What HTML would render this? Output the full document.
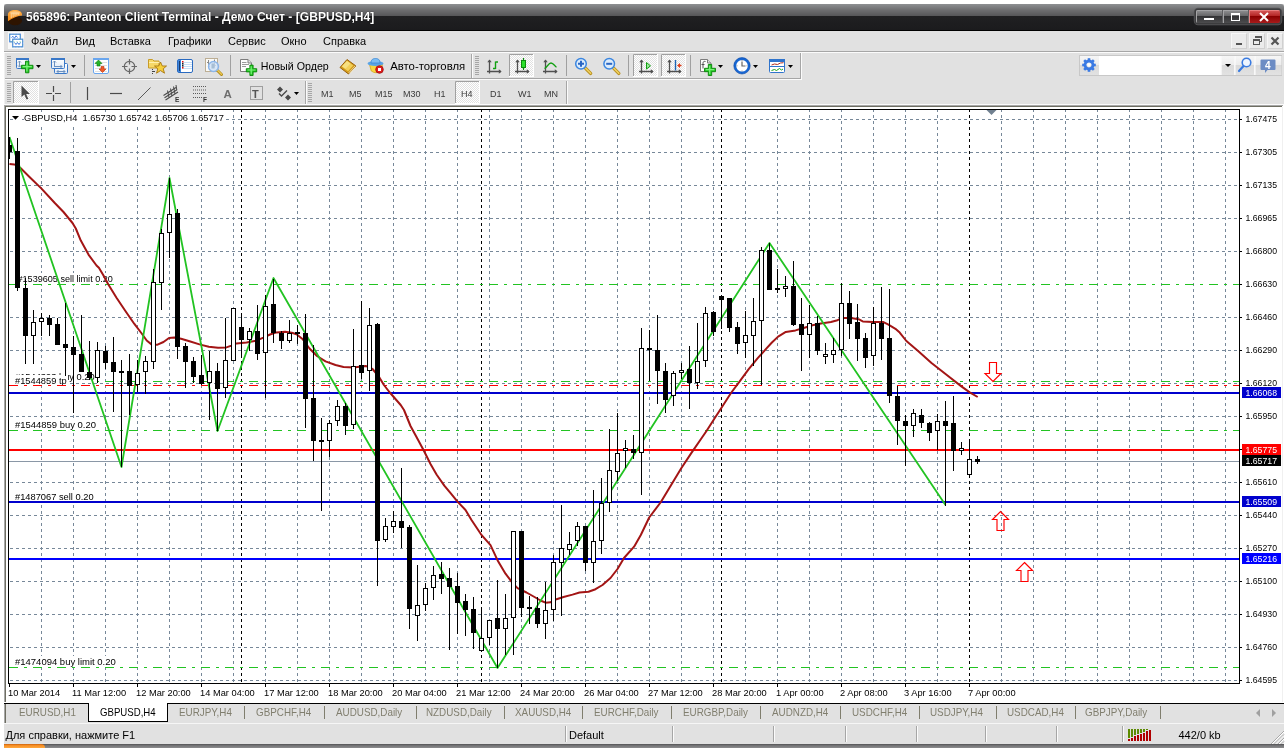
<!DOCTYPE html>
<html lang="ru"><head><meta charset="utf-8"><title>565896: Panteon Client Terminal - Демо Счет - [GBPUSD,H4]</title>
<style>

html,body{margin:0;padding:0;background:#fff;}
body{width:1288px;height:748px;position:relative;overflow:hidden;font-family:"Liberation Sans",sans-serif;font-size:11px;color:#000;}
.abs{position:absolute;}
.t{position:absolute;white-space:nowrap;line-height:1;}
#win{position:absolute;left:4px;top:4px;width:1280px;height:740px;background:#e1e1e1;}
#title{position:absolute;left:4px;top:4px;width:1280px;height:27px;background:linear-gradient(#8e9092 0px,#6e6e70 6px,#58585a 11.5px,#202022 12.2px,#1b1b1d 25.8px,#000 26px,#000 27px);border-radius:3px 3px 0 0;}
#title .cap{position:absolute;left:22px;top:5px;font-weight:bold;font-size:12.1px;color:#fff;white-space:nowrap;line-height:16px;text-shadow:0 0 1px #000;}
.hl{position:absolute;height:1px;}
.vl{position:absolute;width:1px;}
.menu{position:absolute;top:35px;font-size:11px;line-height:13px;white-space:nowrap;}
.tab{position:absolute;top:706px;font-size:11px;line-height:13px;color:#807e6e;white-space:nowrap;transform:scaleX(.895);transform-origin:0 0;}
.tsep{position:absolute;top:706px;width:1px;height:13px;background:#807e6e;}
.tf{position:absolute;top:87.5px;font-size:9.8px;line-height:11px;color:#3a3a3a;white-space:nowrap;transform:scaleX(.92);transform-origin:0 0;}
.pressed{position:absolute;background:#f1f1f1;border:1px solid;border-color:#a0a0a0 #fff #fff #a0a0a0;box-sizing:border-box;}
.grip{position:absolute;width:4px;background:repeating-linear-gradient(#a6a6a6 0px,#a6a6a6 1px,transparent 1px,transparent 2px);}
.sep{position:absolute;width:1px;background:#a8a8a8;box-shadow:1px 0 0 #f4f4f4;}
.dd{position:absolute;width:0;height:0;border-left:3px solid transparent;border-right:3px solid transparent;border-top:3px solid #000;}

</style></head><body><div id="root" style="position:absolute;left:0;top:0;width:1288px;height:748px;will-change:transform">
<div id="win"></div>
<div id="title"><svg class="abs" style="left:2.500px;top:4.500px" width="16" height="17" viewBox="0 0 17 18" preserveAspectRatio="none"><defs><linearGradient id="ag" x1="0" y1="0" x2="0" y2="1"><stop offset="0" stop-color="#ffb04a"/><stop offset="1" stop-color="#f58a14"/></linearGradient></defs><ellipse cx="8.500" cy="12.500" rx="7.500" ry="4.800" fill="#2e1400"/><path d="M1 6C1 2.800 4.200 1 8.500 1s7.500 1.800 7.500 5v1C12 7.500 5.500 9.500 1 13z" fill="url(#ag)"/><path d="M4.500 4.500v5M6.500 4v4.500M8.500 4v3.800M10.500 4v3M12.500 4.500v2" stroke="#ffe6c0" stroke-width="1.100" opacity=".75" fill="none"/><ellipse cx="8.500" cy="4" rx="5.200" ry="1.600" fill="#ffe0b0" opacity=".6"/></svg><div class="cap">565896: Panteon Client Terminal - Демо Счет - [GBPUSD,H4]</div><div class="abs" style="left:1192px;top:6px;width:84px;height:13px;border-radius:2px;box-shadow:0 0 0 1.500px #3c3c3e,0 0 0 2.200px #5a5a5c;overflow:hidden;background:#5e5e60"><div class="abs" style="left:0;top:0;width:26px;height:13px;background:linear-gradient(#929294,#626264 50%,#343436 50%,#4c4c4e);box-shadow:inset 1px 1px 0 #a4a4a6"></div><div class="abs" style="left:27px;top:0;width:25px;height:13px;background:linear-gradient(#929294,#626264 50%,#343436 50%,#4c4c4e);box-shadow:inset 1px 1px 0 #a4a4a6"></div><div class="abs" style="left:53px;top:0;width:31px;height:13px;background:linear-gradient(#d85c5c,#b02020 50%,#8a0000 50%,#a81c1c);box-shadow:inset 1px 1px 0 #e88080"></div><div class="abs" style="left:8px;top:8px;width:10px;height:2px;background:#fff"></div><div class="abs" style="left:35px;top:3px;width:9px;height:8px;border:1px solid #fff;border-top-width:2px;box-sizing:border-box"></div><svg class="abs" style="left:62px;top:1.500px" width="12" height="10" viewBox="0 0 12 10"><path d="M2 1l8 8M10 1l-8 8" stroke="#fff" stroke-width="2"/></svg></div></div>
<div class="abs" style="left:4px;top:31px;width:1280px;height:20px;background:#e1e1e1"></div>
<svg class="abs" style="left:8px;top:32px" width="17" height="18" viewBox="0 0 17 18"><rect width="16" height="17" fill="#f8f8f8"/><rect x="1.700" y="2.200" width="10.600" height="7.600" fill="#fff" stroke="#4a82e4" stroke-width="1.150"/><path d="M3.500 5.500l1.500 -1.200l1.500 2l1.500 -2.500l1.500 1.700" fill="none" stroke="#3f7ae0"/><rect x="4.700" y="7.200" width="10" height="7.600" fill="#fff" stroke="#4a82e4" stroke-width="1.150"/><path d="M6.500 10.500l1.500 2l1.500 -2l1.500 2l1.500 -2" fill="none" stroke="#3f7ae0"/><rect x="1.700" y="2.200" width="10.600" height="7.600" fill="none" stroke="#58c090" stroke-width="1.150" stroke-dasharray="1 2" opacity=".6"/><rect x="4.700" y="7.200" width="10" height="7.600" fill="none" stroke="#58c090" stroke-width="1.150" stroke-dasharray="1 2" opacity=".6"/></svg>
<div class="menu" style="left:31px">Файл</div>
<div class="menu" style="left:75px">Вид</div>
<div class="menu" style="left:110px">Вставка</div>
<div class="menu" style="left:168px">Графики</div>
<div class="menu" style="left:228px">Сервис</div>
<div class="menu" style="left:281px">Окно</div>
<div class="menu" style="left:323px">Справка</div>
<div class="abs" style="left:1231px;top:33px;width:16px;height:16px;background:#ebebeb;border:1px solid;border-color:#f6f6f6 #d0d0d0 #d0d0d0 #f6f6f6;box-sizing:border-box"></div><div class="abs" style="left:1249px;top:33px;width:16px;height:16px;background:#ebebeb;border:1px solid;border-color:#f6f6f6 #d0d0d0 #d0d0d0 #f6f6f6;box-sizing:border-box"></div><div class="abs" style="left:1267px;top:33px;width:16px;height:16px;background:#ebebeb;border:1px solid;border-color:#f6f6f6 #d0d0d0 #d0d0d0 #f6f6f6;box-sizing:border-box"></div><div class="abs" style="left:1236px;top:43px;width:6px;height:2px;background:#555"></div><svg class="abs" style="left:1252px;top:35px" width="11" height="11" viewBox="0 0 11 11"><path d="M3.500 1.500h6v5h-2" fill="none" stroke="#555"/><rect x="3" y="1" width="7" height="2" fill="#555"/><rect x="1.500" y="4.500" width="6" height="5" fill="none" stroke="#555"/><rect x="1" y="4" width="7" height="2" fill="#555"/></svg><svg class="abs" style="left:1270px;top:36px" width="11" height="10" viewBox="0 0 11 10"><path d="M1.500 1.500l7 7M8.500 1.500l-7 7" stroke="#555" stroke-width="2.200"/></svg>
<div class="hl" style="left:4px;top:51px;width:1280px;background:#a6a6a6"></div>
<div class="hl" style="left:4px;top:52px;width:1280px;background:#fbfbfb"></div>
<div class="hl" style="left:4px;top:78px;width:797px;background:#a6a6a6"></div>
<div class="hl" style="left:4px;top:79px;width:797px;background:#fbfbfb"></div>
<div class="vl" style="left:800px;top:53px;height:26px;background:#a6a6a6"></div>
<div class="vl" style="left:801px;top:53px;height:27px;background:#fbfbfb"></div>
<div class="hl" style="left:4px;top:104px;width:1280px;background:#fbfbfb"></div>
<div class="vl" style="left:305px;top:81px;height:23px;background:#a6a6a6"></div>
<div class="vl" style="left:306px;top:81px;height:23px;background:#fbfbfb"></div>
<div class="vl" style="left:566px;top:81px;height:23px;background:#a6a6a6"></div>
<div class="vl" style="left:567px;top:81px;height:23px;background:#fbfbfb"></div>
<div class="vl" style="left:4px;top:53px;height:51px;background:#f0f0f0"></div>
<div class="grip" style="left:7px;top:56px;height:19px"></div>
<div class="grip" style="left:475px;top:56px;height:19px"></div>
<div class="grip" style="left:7px;top:83px;height:19px"></div>
<div class="grip" style="left:308px;top:83px;height:19px"></div>
<div class="vl" style="left:471px;top:54px;height:24px;background:#a6a6a6"></div>
<div class="vl" style="left:472px;top:54px;height:24px;background:#fbfbfb"></div>
<svg class="abs" style="left:0;top:0" width="1288" height="108" viewBox="0 0 1288 108" font-family='"Liberation Sans", sans-serif'>
<defs><linearGradient id="wg" x1="0" y1="0" x2="0" y2="1"><stop offset="0" stop-color="#fff"/><stop offset="1" stop-color="#dfe9f6"/></linearGradient><linearGradient id="bg2" x1="0" y1="0" x2="0" y2="1"><stop offset="0" stop-color="#f6f6f6"/><stop offset=".5" stop-color="#ececec"/><stop offset=".5" stop-color="#dadada"/><stop offset="1" stop-color="#e2e2e2"/></linearGradient><pattern id="chk" width="2" height="2" patternUnits="userSpaceOnUse"><rect width="2" height="2" fill="#fff"/><rect width="1" height="1" fill="#e1e1e1"/><rect x="1" y="1" width="1" height="1" fill="#e1e1e1"/></pattern></defs>
<rect x="509" y="54" width="25" height="23" fill="url(#chk)"/>
<path d="M509.5 77V54.5H534" fill="none" stroke="#a0a0a0"/>
<path d="M509 76.5H533.5V54" fill="none" stroke="#fff"/>
<rect x="633" y="54" width="25" height="23" fill="url(#chk)"/>
<path d="M633.5 77V54.5H658" fill="none" stroke="#a0a0a0"/>
<path d="M633 76.5H657.5V54" fill="none" stroke="#fff"/>
<rect x="661" y="54" width="25" height="23" fill="url(#chk)"/>
<path d="M661.5 77V54.5H686" fill="none" stroke="#a0a0a0"/>
<path d="M661 76.5H685.5V54" fill="none" stroke="#fff"/>
<rect x="13" y="81" width="26" height="23" fill="url(#chk)"/>
<path d="M13.5 104V81.5H39" fill="none" stroke="#a0a0a0"/>
<path d="M13 103.5H38.5V81" fill="none" stroke="#fff"/>
<rect x="455" y="81" width="25" height="23" fill="url(#chk)"/>
<path d="M455.5 104V81.5H480" fill="none" stroke="#a0a0a0"/>
<path d="M455 103.5H479.5V81" fill="none" stroke="#fff"/>
<rect x="84" y="55" width="1" height="21" fill="#a0a0a0"/>
<rect x="230" y="55" width="1" height="21" fill="#a0a0a0"/>
<rect x="566" y="55" width="1" height="21" fill="#a0a0a0"/>
<rect x="628" y="55" width="1" height="21" fill="#a0a0a0"/>
<rect x="690" y="55" width="1" height="21" fill="#a0a0a0"/>
<rect x="70" y="82" width="1" height="21" fill="#a0a0a0"/>
<rect x="16.500" y="58.500" width="12" height="10" rx="1" fill="url(#wg)" stroke="#3a78c8"/><rect x="16" y="58" width="13" height="2" fill="#3a78c8"/>
<path d="M19.500 61v6M18 62.500l1.500 -1.500l1.500 1.500M18 65.500l1.500 1.500l1.500 -1.500" stroke="#7a98b8" fill="none"/>
<path d="M25.5 61.2h3.4v4.1h4.1v3.4h-4.1v4.1h-3.4v-4.1h-4.1v-3.4h4.1z" fill="#22c822" stroke="#0a860a" stroke-width=".9" stroke-linejoin="round"/><path d="M26.9 62.400000000000006v9.2M22.599999999999998 66.7h9.2" stroke="#7df07d" stroke-width="1.200" fill="none"/>
<path d="M36 65h5l-2.500 3z" fill="#000"/>
<rect x="54.500" y="63.500" width="13" height="10" rx="1" fill="url(#wg)" stroke="#3a78c8"/>
<path d="M57 71.500h8M58.500 70l-1.500 1.500l1.500 1.500M63.500 70l1.500 1.500l-1.500 1.500" stroke="#6a90c0" fill="none"/>
<rect x="51.500" y="58.500" width="13" height="10" rx="1" fill="url(#wg)" stroke="#3a78c8"/><rect x="51" y="58" width="14" height="2" fill="#3a78c8"/>
<path d="M54.500 61v5M53 62.500l1.500 -1.500l1.500 1.500M54 66.500h8M60.500 65l1.500 1.500l-1.500 1.500" stroke="#6a90c0" fill="none"/>
<path d="M71 65h5l-2.500 3z" fill="#000"/>
<rect x="93.500" y="58.500" width="15" height="15" rx="1.500" fill="#fff" stroke="#6aa6ee"/><rect x="93" y="58" width="16" height="2" fill="#6aa6ee"/>
<path d="M95 62.500h12M95 65.500h12M95 68.500h12M95 71.500h12" stroke="#e0e0e0"/>
<path d="M98.500 60l3.500 3.500h-2v2.500h-3v-2.500h-2z" fill="#28b428" stroke="#0c7c0c" stroke-width=".6"/>
<path d="M102.500 72.500l-3.500 -3.500h2v-2.500h3v2.500h2z" fill="#f05a28" stroke="#b8300c" stroke-width=".6"/>
<circle cx="129.500" cy="66.500" r="5.200" fill="none" stroke="#686868" stroke-width="1.200"/>
<path d="M122 66.500h5.500M131.500 66.500h5.500M129.500 59v5.500M129.500 68.500v5.500" stroke="#686868" stroke-width="1.200"/>
<path d="M148.500 59.500h4l1.500 1.500h5v7h-10.500z" fill="#f6d868" stroke="#c89c28"/><path d="M149 62.500h10" stroke="#fff1b0"/>
<path d="M152.500 69v1M152.500 71v1M152.500 73v1M153 71.500h2" stroke="#444"/>
<path d="M160.500 62l1.800 4h4.200l-3.300 2.800l1.300 4.400l-4 -2.600l-4 2.600l1.300 -4.400l-3.300 -2.800h4.200z" fill="#f6cf3c" stroke="#a87610" stroke-width=".9" stroke-linejoin="round"/>
<rect x="177.500" y="59.500" width="15" height="13" rx="1.500" fill="#fff" stroke="#2a6ac0"/><rect x="178" y="60" width="3" height="12" fill="#3f86dc"/>
<path d="M182 62.500h10M182 64.500h10M182 66.500h10M182 68.500h10" stroke="#b8d4f4" stroke-width=".8"/>
<rect x="179" y="61" width="1" height="10" fill="#1a3c70"/>
<rect x="182" y="61" width="1.500" height="1.500" fill="#e01010"/><rect x="182" y="63" width="1.500" height="1.500" fill="#222"/><rect x="182" y="65" width="1.500" height="1.500" fill="#222"/><rect x="182" y="67" width="1.500" height="1.500" fill="#e01010"/>
<rect x="205.500" y="58.500" width="12" height="13" fill="#fbfaf6" stroke="#bcae94"/>
<path d="M208.500 60v8M207 62.500h1.500M208.500 66.500h1.500M214.500 59.500v8M213 61.500h1.500M214.500 65.500h1.500" stroke="#8a8a8a" fill="none"/>
<path d="M217.500 70.500l4 4" stroke="#b08a1a" stroke-width="3" stroke-linecap="round"/><path d="M217.500 70.300l4 4" stroke="#ecc850" stroke-width="1.400" stroke-linecap="round"/>
<circle cx="213.500" cy="66.500" r="5" fill="#cfe2f7" fill-opacity=".8" stroke="#8cb6ea" stroke-width="1.400"/><rect x="211.500" y="63.500" width="3" height="5" fill="#9ab4cc" opacity=".8"/>
<path d="M240.500 59.500h7.500l3.500 3.500v8.500h-11z" fill="#fdfdfd" stroke="#7c7c7c"/><path d="M248 59.500v3.500h3.500" fill="#e4e4e4" stroke="#7c7c7c"/>
<path d="M242 62.500h4.500M242 64.500h7M242 66.500h4" stroke="#9a9a9a"/>
<path d="M249.9 65.1h3.2v3.6h3.6v3.2h-3.6v3.6h-3.2v-3.6h-3.6v-3.2h3.6z" fill="#22c822" stroke="#0a860a" stroke-width=".9" stroke-linejoin="round"/><path d="M251.2 66.3v8.0M247.5 70.0h8.0" stroke="#7df07d" stroke-width="1.200" fill="none"/>
<text x="260.800" y="69.500" font-size="11" textLength="68" lengthAdjust="spacingAndGlyphs">Новый Ордер</text>
<path d="M347 59.500l9 6.500l-7.500 8l-8.500 -6.500z" fill="#d29a1a" stroke="#9a6210" stroke-linejoin="round"/>
<path d="M347 60.800l6.300 4.800l-5.300 5.600l-6.300 -4.800z" fill="#f2cf58"/><path d="M347 61l3.500 2.600l-5 5.200l-3.500 -2.600z" fill="#f8e48c" opacity=".8"/><path d="M348.800 72.800l6.600 -7M349.800 73.500l6.200 -6.600" stroke="#fff4cc" stroke-width=".8"/>
<path d="M369.500 64.500h13l-1.800 6.500q-4.700 3.500 -9.400 0z" fill="#f8d640" stroke="#d6a41c" stroke-width=".8"/>
<ellipse cx="375.500" cy="63.500" rx="8" ry="2.600" fill="#5aa4e6"/><path d="M371 63c0 -3.500 2 -4.500 4.500 -4.500s4.500 1 4.500 4.500z" fill="#7cbcf2" stroke="#3a88d6" stroke-width=".8"/>
<circle cx="379.500" cy="69.500" r="3.800" fill="#e01c1c" stroke="#a00c0c" stroke-width=".8"/><rect x="378" y="68" width="3" height="3" fill="#fff"/>
<text x="390.200" y="69.500" font-size="11" textLength="75" lengthAdjust="spacingAndGlyphs">Авто-торговля</text>
<path d="M489.5 60V73.5M487.0 71.500H501.0" stroke="#505050" stroke-width="1.300" fill="none"/><path d="M487.3 62.2l2.200 -2.800l2.200 2.800z" fill="#505050"/><path d="M498.8 69.300l2.800 2.200l-2.800 2.200z" fill="#505050"/>
<path d="M495.500 61.500v7.500M495.500 62h2.500M493 68.500h2.500" stroke="#12a012" stroke-width="1.400" fill="none"/>
<path d="M517.5 60V73.5M515.0 71.500H529.0" stroke="#505050" stroke-width="1.300" fill="none"/><path d="M515.3 62.2l2.200 -2.800l2.200 2.800z" fill="#505050"/><path d="M526.8 69.300l2.800 2.200l-2.800 2.200z" fill="#505050"/>
<path d="M523.500 58v12" stroke="#0c8c0c" stroke-width="1.200"/><rect x="521.500" y="60.500" width="4" height="7" fill="#2be02b" stroke="#0c8c0c"/>
<path d="M545.5 60V73.5M543.0 71.500H557.0" stroke="#505050" stroke-width="1.300" fill="none"/><path d="M543.3 62.2l2.200 -2.800l2.200 2.800z" fill="#505050"/><path d="M554.8 69.300l2.800 2.200l-2.800 2.200z" fill="#505050"/>
<path d="M544.500 68.500c2.500 -1 4 -5.500 6.500 -5.500s3.500 3 5.500 4.200" stroke="#12a012" stroke-width="1.300" fill="none"/>
<path d="M585.6 68.39999999999999l5 5" stroke="#b89020" stroke-width="3.400" stroke-linecap="round"/><path d="M585.6 68.2l5 5" stroke="#f0d060" stroke-width="1.600" stroke-linecap="round"/><circle cx="581" cy="63.8" r="5.300" fill="#dcecfb" stroke="#3b86e0" stroke-width="1.500"/><path d="M578 63.8h6M581 60.8v6" stroke="#2a66c4" stroke-width="2"/>
<path d="M613.8000000000001 68.39999999999999l5 5" stroke="#b89020" stroke-width="3.400" stroke-linecap="round"/><path d="M613.8000000000001 68.2l5 5" stroke="#f0d060" stroke-width="1.600" stroke-linecap="round"/><circle cx="609.2" cy="63.8" r="5.300" fill="#dcecfb" stroke="#3b86e0" stroke-width="1.500"/><path d="M606.2 63.8h6" stroke="#2a66c4" stroke-width="2"/>
<path d="M641.5 60V73.5M639.0 71.500H653.0" stroke="#505050" stroke-width="1.300" fill="none"/><path d="M639.3 62.2l2.200 -2.800l2.200 2.800z" fill="#505050"/><path d="M650.8 69.300l2.800 2.200l-2.800 2.200z" fill="#505050"/>
<path d="M646.500 62.500l4 3.300l-4 3.300z" fill="#9be89b" stroke="#12a012"/>
<path d="M669.5 60V73.5M667.0 71.500H681.0" stroke="#505050" stroke-width="1.300" fill="none"/><path d="M667.3 62.2l2.200 -2.800l2.200 2.800z" fill="#505050"/><path d="M678.8 69.300l2.800 2.200l-2.800 2.200z" fill="#505050"/>
<path d="M675.500 60v10.500" stroke="#1c64b4" stroke-width="1.400"/><path d="M677 65.500l3 -2.500v1.800h1.500v1.400h-1.500v1.800z" fill="#e0401c"/>
<path d="M700.500 59.500h7l3.500 3.500v8.500h-10.500z" fill="#fdfdfd" stroke="#7c7c7c"/><path d="M707.500 59.500v3.500h3.500" fill="#e4e4e4" stroke="#7c7c7c"/>
<path d="M705.500 61.500c-2 -.5 -2.500 .5 -2.500 2v5M701.500 64.500h3" stroke="#555" fill="none"/>
<path d="M708.3 64.5h3.4v3.8h3.8v3.4h-3.8v3.8h-3.4v-3.8h-3.8v-3.4h3.8z" fill="#22c822" stroke="#0a860a" stroke-width=".9" stroke-linejoin="round"/><path d="M709.7 65.7v8.6M705.7 69.7h8.6" stroke="#7df07d" stroke-width="1.200" fill="none"/>
<path d="M718 65h5l-2.500 3z" fill="#000"/>
<circle cx="742" cy="65.800" r="7" fill="#fff" stroke="#1766d2" stroke-width="2.400"/><circle cx="742" cy="65.800" r="8.200" fill="none" stroke="#0d4aa6" stroke-width=".6"/>
<path d="M742 61.500v4.500h3.500" stroke="#666" stroke-width="1.200" fill="none"/><path d="M742 60v1M742 70.500v1M736.500 65.800h1M746.500 65.800h1" stroke="#999"/>
<path d="M753 65h5l-2.500 3z" fill="#000"/>
<rect x="769.500" y="59.500" width="15" height="13" rx="1" fill="#fff" stroke="#2f74cc"/><rect x="769" y="59" width="16" height="3" fill="#2f74cc"/><path d="M770 66.500h14" stroke="#2f74cc"/>
<path d="M771.500 65l3 -1l3 .5l3 -1.500l3 -.3" stroke="#b03020" fill="none"/><path d="M771.500 70.500l3 -1l2 1l3 -2l2 1.500l1.500 -1" stroke="#18a018" fill="none"/>
<path d="M788 65h5l-2.500 3z" fill="#000"/>
<rect x="1079.500" y="55.500" width="202" height="20" fill="#fff" stroke="#c8c8c8"/>
<rect x="1080" y="56" width="19" height="19" fill="url(#bg2)"/>
<rect x="1221.500" y="56" width="12.500" height="19" fill="url(#bg2)"/><rect x="1235.500" y="56" width="18.500" height="19" fill="url(#bg2)"/><rect x="1255.500" y="56" width="26" height="19" fill="url(#bg2)"/>
<path d="M1221 56v19M1234.500 56v19M1254.500 56v19" stroke="#f8f8f8"/>
<g transform="translate(1089 65)"><circle r="4" fill="none" stroke="#3a7ae4" stroke-width="2.800"/><rect x="-1.300" y="-6.800" width="2.600" height="2.600" fill="#3a7ae4" transform="rotate(0)"/><rect x="-1.300" y="-6.800" width="2.600" height="2.600" fill="#3a7ae4" transform="rotate(45)"/><rect x="-1.300" y="-6.800" width="2.600" height="2.600" fill="#3a7ae4" transform="rotate(90)"/><rect x="-1.300" y="-6.800" width="2.600" height="2.600" fill="#3a7ae4" transform="rotate(135)"/><rect x="-1.300" y="-6.800" width="2.600" height="2.600" fill="#3a7ae4" transform="rotate(180)"/><rect x="-1.300" y="-6.800" width="2.600" height="2.600" fill="#3a7ae4" transform="rotate(225)"/><rect x="-1.300" y="-6.800" width="2.600" height="2.600" fill="#3a7ae4" transform="rotate(270)"/><rect x="-1.300" y="-6.800" width="2.600" height="2.600" fill="#3a7ae4" transform="rotate(315)"/><circle r="1.800" fill="#fff"/></g>
<path d="M1225 64h6l-3 3z" fill="#000"/>
<circle cx="1246.500" cy="62.500" r="4.300" fill="#eef5ff" stroke="#3a7be0" stroke-width="1.600"/><path d="M1243.500 66l-4.500 5" stroke="#3a7be0" stroke-width="2.200" stroke-linecap="round"/>
<path d="M1261.500 59.500h13a1 1 0 0 1 1 1v8.500a1 1 0 0 1 -1 1h-7l-2.500 3v-3h-3.500a1 1 0 0 1 -1 -1v-8.500a1 1 0 0 1 1 -1z" fill="#6c8cc4"/>
<text x="1265" y="68.500" font-size="10" font-weight="bold" fill="#fff">4</text>
</svg>
<svg class="abs" style="left:0;top:0" width="1288" height="108" viewBox="0 0 1288 108" font-family='"Liberation Sans", sans-serif'>
<path d="M21.500 85.500v11.500l2.800 -2.500l2.200 5l1.800 -.8l-2.200 -4.800h3.800z" fill="#4a4a4a"/>
<path d="M46 93.500h6M55 93.500h6M53.500 86v6M53.500 95v6" stroke="#4a4a4a" stroke-width="1.200"/>
<path d="M87.500 87v13" stroke="#4a4a4a" stroke-width="1.200"/>
<path d="M110 93.500h12" stroke="#4a4a4a" stroke-width="1.200"/>
<path d="M138 100l12.500 -12.500" stroke="#5a5a5a" stroke-width="1"/>
<path d="M163.500 95.500l12.500 -8M165.500 100l12.500 -8M164.500 97.800l12.500 -8" stroke="#4a4a4a" stroke-width="1.100"/>
<path d="M167.500 90.500l1.500 7M170.500 88.500l1.500 7.500M173.500 86.500l1.500 7.500M176 85l.8 5" stroke="#4a4a4a" stroke-width="1" fill="none"/>
<text x="175" y="102" font-size="6.500" font-weight="bold" fill="#333">E</text>
<path d="M193 86.5H206" stroke="#5a5a5a" stroke-dasharray="1 1"/>
<path d="M193 90H206" stroke="#5a5a5a" stroke-dasharray="1 1"/>
<path d="M193 93.5H206" stroke="#5a5a5a" stroke-dasharray="1 1"/>
<path d="M193 97.5H202" stroke="#5a5a5a" stroke-dasharray="1 1"/>
<text x="203" y="102" font-size="6.500" font-weight="bold" fill="#333">F</text>
<text x="223.500" y="97.800" font-size="11.5" font-weight="bold" fill="#6e6e6e">A</text>
<rect x="250.500" y="86.500" width="12" height="13" fill="none" stroke="#5a5a5a" stroke-dasharray="1 1"/>
<text x="252" y="97.800" font-size="11" font-weight="bold" fill="#555">T</text>
<path d="M280 86.500l3 3l-3 3l-3 -3zM288 94.500l3 3l-3 3l-3 -3z" fill="#4a4a4a"/>
<path d="M279 93.500l2.500 2.500l5.500 -5.500" stroke="#4a4a4a" stroke-width="1.400" fill="none"/>
<path d="M294 92h5l-2.500 3z" fill="#000"/>
</svg>
<div class="tf" style="left:321px">M1</div>
<div class="tf" style="left:349px">M5</div>
<div class="tf" style="left:375px">M15</div>
<div class="tf" style="left:403px">M30</div>
<div class="tf" style="left:434px">H1</div>
<div class="tf" style="left:461px">H4</div>
<div class="tf" style="left:490px">D1</div>
<div class="tf" style="left:517.5px">W1</div>
<div class="tf" style="left:544px">MN</div>
<div class="abs" style="left:4px;top:105px;width:1280px;height:598px;background:#fff"></div>
<div class="hl" style="left:4px;top:105px;width:1279px;background:#a8a8a8"></div>
<div class="hl" style="left:5px;top:106px;width:1277px;background:#6e6e62"></div>
<div class="vl" style="left:1282px;top:107px;height:595px;background:#f0f0f0"></div>
<svg width="1288" height="748" viewBox="0 0 1288 748" style="position:absolute;left:0;top:0" font-family='"Liberation Sans", sans-serif'>
<rect x="6" y="107" width="1276" height="595" fill="#fff"/>
<g shape-rendering="crispEdges">
<line x1="10" x2="1239" y1="119.5" y2="119.5" stroke="#778899" stroke-dasharray="3 3"/>
<line x1="10" x2="1239" y1="152.5" y2="152.5" stroke="#778899" stroke-dasharray="3 3"/>
<line x1="10" x2="1239" y1="185.5" y2="185.5" stroke="#778899" stroke-dasharray="3 3"/>
<line x1="10" x2="1239" y1="218.5" y2="218.5" stroke="#778899" stroke-dasharray="3 3"/>
<line x1="10" x2="1239" y1="251.5" y2="251.5" stroke="#778899" stroke-dasharray="3 3"/>
<line x1="10" x2="1239" y1="284.5" y2="284.5" stroke="#778899" stroke-dasharray="3 3"/>
<line x1="10" x2="1239" y1="317.5" y2="317.5" stroke="#778899" stroke-dasharray="3 3"/>
<line x1="10" x2="1239" y1="350.5" y2="350.5" stroke="#778899" stroke-dasharray="3 3"/>
<line x1="10" x2="1239" y1="383.5" y2="383.5" stroke="#778899" stroke-dasharray="3 3"/>
<line x1="10" x2="1239" y1="416.5" y2="416.5" stroke="#778899" stroke-dasharray="3 3"/>
<line x1="10" x2="1239" y1="449.5" y2="449.5" stroke="#778899" stroke-dasharray="3 3"/>
<line x1="10" x2="1239" y1="482.5" y2="482.5" stroke="#778899" stroke-dasharray="3 3"/>
<line x1="10" x2="1239" y1="515.5" y2="515.5" stroke="#778899" stroke-dasharray="3 3"/>
<line x1="10" x2="1239" y1="548.5" y2="548.5" stroke="#778899" stroke-dasharray="3 3"/>
<line x1="10" x2="1239" y1="581.5" y2="581.5" stroke="#778899" stroke-dasharray="3 3"/>
<line x1="10" x2="1239" y1="614.5" y2="614.5" stroke="#778899" stroke-dasharray="3 3"/>
<line x1="10" x2="1239" y1="647.5" y2="647.5" stroke="#778899" stroke-dasharray="3 3"/>
<line x1="10" x2="1239" y1="680.5" y2="680.5" stroke="#778899" stroke-dasharray="3 3"/>
<line x1="41.5" x2="41.5" y1="109" y2="683" stroke="#778899" stroke-dasharray="3 3"/>
<line x1="73.5" x2="73.5" y1="109" y2="683" stroke="#778899" stroke-dasharray="3 3"/>
<line x1="105.5" x2="105.5" y1="109" y2="683" stroke="#778899" stroke-dasharray="3 3"/>
<line x1="137.5" x2="137.5" y1="109" y2="683" stroke="#778899" stroke-dasharray="3 3"/>
<line x1="169.5" x2="169.5" y1="109" y2="683" stroke="#778899" stroke-dasharray="3 3"/>
<line x1="201.5" x2="201.5" y1="109" y2="683" stroke="#778899" stroke-dasharray="3 3"/>
<line x1="233.5" x2="233.5" y1="109" y2="683" stroke="#778899" stroke-dasharray="3 3"/>
<line x1="265.5" x2="265.5" y1="109" y2="683" stroke="#778899" stroke-dasharray="3 3"/>
<line x1="297.5" x2="297.5" y1="109" y2="683" stroke="#778899" stroke-dasharray="3 3"/>
<line x1="329.5" x2="329.5" y1="109" y2="683" stroke="#778899" stroke-dasharray="3 3"/>
<line x1="361.5" x2="361.5" y1="109" y2="683" stroke="#778899" stroke-dasharray="3 3"/>
<line x1="393.5" x2="393.5" y1="109" y2="683" stroke="#778899" stroke-dasharray="3 3"/>
<line x1="425.5" x2="425.5" y1="109" y2="683" stroke="#778899" stroke-dasharray="3 3"/>
<line x1="457.5" x2="457.5" y1="109" y2="683" stroke="#778899" stroke-dasharray="3 3"/>
<line x1="489.5" x2="489.5" y1="109" y2="683" stroke="#778899" stroke-dasharray="3 3"/>
<line x1="521.5" x2="521.5" y1="109" y2="683" stroke="#778899" stroke-dasharray="3 3"/>
<line x1="553.5" x2="553.5" y1="109" y2="683" stroke="#778899" stroke-dasharray="3 3"/>
<line x1="585.5" x2="585.5" y1="109" y2="683" stroke="#778899" stroke-dasharray="3 3"/>
<line x1="617.5" x2="617.5" y1="109" y2="683" stroke="#778899" stroke-dasharray="3 3"/>
<line x1="649.5" x2="649.5" y1="109" y2="683" stroke="#778899" stroke-dasharray="3 3"/>
<line x1="681.5" x2="681.5" y1="109" y2="683" stroke="#778899" stroke-dasharray="3 3"/>
<line x1="713.5" x2="713.5" y1="109" y2="683" stroke="#778899" stroke-dasharray="3 3"/>
<line x1="745.5" x2="745.5" y1="109" y2="683" stroke="#778899" stroke-dasharray="3 3"/>
<line x1="777.5" x2="777.5" y1="109" y2="683" stroke="#778899" stroke-dasharray="3 3"/>
<line x1="809.5" x2="809.5" y1="109" y2="683" stroke="#778899" stroke-dasharray="3 3"/>
<line x1="841.5" x2="841.5" y1="109" y2="683" stroke="#778899" stroke-dasharray="3 3"/>
<line x1="873.5" x2="873.5" y1="109" y2="683" stroke="#778899" stroke-dasharray="3 3"/>
<line x1="905.5" x2="905.5" y1="109" y2="683" stroke="#778899" stroke-dasharray="3 3"/>
<line x1="937.5" x2="937.5" y1="109" y2="683" stroke="#778899" stroke-dasharray="3 3"/>
<line x1="1001.5" x2="1001.5" y1="109" y2="683" stroke="#778899" stroke-dasharray="3 3"/>
<line x1="1033.5" x2="1033.5" y1="109" y2="683" stroke="#778899" stroke-dasharray="3 3"/>
<line x1="1065.5" x2="1065.5" y1="109" y2="683" stroke="#778899" stroke-dasharray="3 3"/>
<line x1="1097.5" x2="1097.5" y1="109" y2="683" stroke="#778899" stroke-dasharray="3 3"/>
<line x1="1129.5" x2="1129.5" y1="109" y2="683" stroke="#778899" stroke-dasharray="3 3"/>
<line x1="1161.5" x2="1161.5" y1="109" y2="683" stroke="#778899" stroke-dasharray="3 3"/>
<line x1="1193.5" x2="1193.5" y1="109" y2="683" stroke="#778899" stroke-dasharray="3 3"/>
<line x1="1225.5" x2="1225.5" y1="109" y2="683" stroke="#778899" stroke-dasharray="3 3"/>
<line x1="241.5" x2="241.5" y1="109" y2="683" stroke="#000" stroke-dasharray="3 3"/>
<line x1="481.5" x2="481.5" y1="109" y2="683" stroke="#000" stroke-dasharray="3 3"/>
<line x1="721.5" x2="721.5" y1="109" y2="683" stroke="#000" stroke-dasharray="3 3"/>
<line x1="969.5" x2="969.5" y1="109" y2="683" stroke="#000" stroke-dasharray="3 3"/>
</g>
<rect x="24" y="112" width="201" height="12" fill="#fff"/><rect x="13" y="119" width="8" height="1" fill="#fff"/>
<path d="M12 116h7l-3.500 3.800z" fill="#000"/>
<text transform="translate(24 121) scale(0.945 1)" font-size="9.8" fill="#000" xml:space="preserve">GBPUSD,H4  1.65730 1.65742 1.65706 1.65717</text>
<g shape-rendering="crispEdges">
<rect x="9" y="273" width="105.5" height="11" fill="#fff"/>
<text transform="translate(17.5 282) scale(0.927 1)" font-size="9.8" fill="#000" xml:space="preserve">#1539605 sell limit 0.20</text>
<rect x="9" y="284" width="1230" height="1" fill="#fff"/>
<line x1="9" x2="1239" y1="284.5" y2="284.5" stroke="#22c322" stroke-dasharray="9 6 3 6"/>
<rect x="9" y="381" width="1230" height="1" fill="#fff"/>
<line x1="9" x2="1239" y1="381.5" y2="381.5" stroke="#22c322" stroke-dasharray="9 6 3 6"/>
<rect x="9" y="370.5" width="88" height="11" fill="#fff"/>
<text transform="translate(15 379.5) scale(0.95 1)" font-size="9.8" fill="#000" xml:space="preserve">#1544393 buy 0.20</text>
<rect x="9" y="374.5" width="59" height="11" fill="#fff"/>
<text transform="translate(15 383.5) scale(0.95 1)" font-size="9.8" fill="#000" xml:space="preserve">#1544859 tp</text>
<rect x="9" y="385" width="1230" height="1" fill="#fff"/>
<line x1="9" x2="1239" y1="385.5" y2="385.5" stroke="#ff0000" stroke-dasharray="9 6 3 6"/>
<rect x="9" y="418.5" width="89" height="11" fill="#fff"/>
<text transform="translate(15 427.5) scale(0.965 1)" font-size="9.8" fill="#000" xml:space="preserve">#1544859 buy 0.20</text>
<rect x="9" y="430" width="1230" height="1" fill="#fff"/>
<line x1="9" x2="1239" y1="430.5" y2="430.5" stroke="#22c322" stroke-dasharray="9 6 3 6"/>
<rect x="9" y="490.5" width="85" height="11" fill="#fff"/>
<text transform="translate(15 499.5) scale(0.95 1)" font-size="9.8" fill="#000" xml:space="preserve">#1487067 sell 0.20</text>
<rect x="9" y="655.5" width="109" height="11" fill="#fff"/>
<text transform="translate(15 664.5) scale(0.97 1)" font-size="9.8" fill="#000" xml:space="preserve">#1474094 buy limit 0.20</text>
<rect x="9" y="667" width="1230" height="1" fill="#fff"/>
<line x1="9" x2="1239" y1="667.5" y2="667.5" stroke="#22c322" stroke-dasharray="9 6 3 6"/>
<rect x="9" y="392" width="1231" height="2" fill="#0000cd"/>
<rect x="9" y="449" width="1231" height="2" fill="#ff0000"/>
<rect x="9" y="461" width="1231" height="1" fill="#8a97a6"/>
<rect x="9" y="501" width="1231" height="2" fill="#0000cd"/>
<rect x="9" y="558" width="1231" height="2" fill="#0000ff"/>
</g>
<clipPath id="cc"><rect x="9" y="110" width="1230" height="573"/></clipPath>
<g clip-path="url(#cc)">
<polyline points="9.5,164 14.5,164.5 20.5,168 29.5,177 41.5,188.6 54.8,203 63.5,212 72.5,223 75.8,228.5 80.8,240.6 88.5,254.6 96.5,265.5 98.9,267.8 103.5,275.5 108.2,284.3 116.5,297.8 124.9,310.3 134.2,323.7 141.7,333.5 146.7,340.5 151.8,344.6 157.5,344.7 163.5,342 169.0,338 174.5,337.5 181.1,338.8 189.5,341.2 199.5,344.4 208.8,346.7 218.0,347.8 226.4,347.4 231.5,345.6 236.5,343.4 246.5,342.6 256.5,340.7 263.3,337.7 270.0,334.5 276.5,332.4 285.1,331.8 291.8,332.7 296.5,334.2 302.5,339 309.5,348.5 317.0,356 325.5,361.4 335.5,365 343.5,367 353.5,367.5 365.5,366 369.5,367 372.5,369 378.5,376 383.9,385 389.8,392.5 400.7,405 404.0,410 410.5,426 416.5,437 423.5,450 430.5,464 436.7,474.7 444.3,485.6 451.0,493.7 457.5,501.6 465.5,510 471.5,520 481.0,534.3 490.5,545.2 497.5,560.2 505.5,573.7 512.5,582.9 517.5,588.1 526.5,592.5 534.5,597 540.5,600.5 545.5,602.7 550.5,602.3 556.5,599.2 563.5,597 572.5,594.6 579.5,592.5 588.5,591.8 595.5,589.2 602.5,585 610.5,578 617.5,569 624.0,558 634.1,546.7 640.8,535 649.2,517.5 660.9,502 671.0,485.3 681.1,468.5 691.1,453.4 700.3,440 706.5,431 714.5,418.5 722.0,407 731.0,393 739.5,381.6 748.5,369.3 757.5,358.4 766.5,348.4 771.9,342.5 778.1,336.6 785.8,331.9 795.5,330.4 804.5,327.7 812.5,325.2 820.9,323.5 830.9,322 837.5,320.2 842.7,318 851.1,318 858.5,319.2 862.8,321.4 872.9,322 882.9,321.9 888.0,324.4 896.3,329.4 899.7,332.6 906.4,341 918.1,351 931.5,363 946.5,374.8 961.7,386.6 970.1,392.6 977.7,397" fill="none" stroke="#a31515" stroke-width="2" stroke-linejoin="round"/>
<polyline points="9.5,137 121.5,467 169.5,178 217.5,431 273.5,278 497.5,668 769.5,243 945.5,505" fill="none" stroke="#22c322" stroke-width="1.8" stroke-linejoin="round"/>
<g shape-rendering="crispEdges">
<rect x="9" y="137" width="1" height="22" fill="#000"/>
<rect x="7" y="145" width="5" height="7" fill="#000"/>
<rect x="17" y="138" width="1" height="153" fill="#000"/>
<rect x="15" y="151" width="5" height="137" fill="#000"/>
<rect x="25" y="278" width="1" height="86" fill="#000"/>
<rect x="23" y="288" width="5" height="48" fill="#000"/>
<rect x="33" y="310" width="1" height="54" fill="#000"/>
<rect x="31" y="322" width="5" height="14" fill="#000"/>
<rect x="32" y="323" width="3" height="12" fill="#fff"/>
<rect x="41" y="313" width="1" height="23" fill="#000"/>
<rect x="39" y="318" width="5" height="4" fill="#000"/>
<rect x="40" y="319" width="3" height="2" fill="#fff"/>
<rect x="49" y="315" width="1" height="21" fill="#000"/>
<rect x="47" y="318" width="5" height="7" fill="#000"/>
<rect x="57" y="318" width="1" height="27" fill="#000"/>
<rect x="55" y="324" width="5" height="21" fill="#000"/>
<rect x="65" y="303" width="1" height="73" fill="#000"/>
<rect x="63" y="344" width="5" height="4" fill="#000"/>
<rect x="73" y="336" width="1" height="77" fill="#000"/>
<rect x="71" y="347" width="5" height="8" fill="#000"/>
<rect x="81" y="315" width="1" height="57" fill="#000"/>
<rect x="79" y="354" width="5" height="18" fill="#000"/>
<rect x="89" y="341" width="1" height="39" fill="#000"/>
<rect x="87" y="372" width="5" height="6" fill="#000"/>
<rect x="97" y="342" width="1" height="41" fill="#000"/>
<rect x="95" y="350" width="5" height="28" fill="#000"/>
<rect x="96" y="351" width="3" height="26" fill="#fff"/>
<rect x="105" y="346" width="1" height="23" fill="#000"/>
<rect x="103" y="351" width="5" height="12" fill="#000"/>
<rect x="113" y="337" width="1" height="75" fill="#000"/>
<rect x="111" y="362" width="5" height="10" fill="#000"/>
<rect x="121" y="360" width="1" height="107" fill="#000"/>
<rect x="119" y="371" width="5" height="2" fill="#000"/>
<rect x="129" y="354" width="1" height="61" fill="#000"/>
<rect x="127" y="371" width="5" height="15" fill="#000"/>
<rect x="137" y="360" width="1" height="32" fill="#000"/>
<rect x="135" y="373" width="5" height="12" fill="#000"/>
<rect x="136" y="374" width="3" height="10" fill="#fff"/>
<rect x="145" y="356" width="1" height="38" fill="#000"/>
<rect x="143" y="361" width="5" height="11" fill="#000"/>
<rect x="144" y="362" width="3" height="9" fill="#fff"/>
<rect x="153" y="269" width="1" height="100" fill="#000"/>
<rect x="151" y="282" width="5" height="80" fill="#000"/>
<rect x="152" y="283" width="3" height="78" fill="#fff"/>
<rect x="161" y="229" width="1" height="81" fill="#000"/>
<rect x="159" y="233" width="5" height="50" fill="#000"/>
<rect x="160" y="234" width="3" height="48" fill="#fff"/>
<rect x="169" y="178" width="1" height="80" fill="#000"/>
<rect x="167" y="214" width="5" height="19" fill="#000"/>
<rect x="168" y="215" width="3" height="17" fill="#fff"/>
<rect x="177" y="209" width="1" height="150" fill="#000"/>
<rect x="175" y="213" width="5" height="134" fill="#000"/>
<rect x="185" y="343" width="1" height="45" fill="#000"/>
<rect x="183" y="346" width="5" height="16" fill="#000"/>
<rect x="193" y="357" width="1" height="26" fill="#000"/>
<rect x="191" y="361" width="5" height="16" fill="#000"/>
<rect x="201" y="355" width="1" height="30" fill="#000"/>
<rect x="199" y="375" width="5" height="9" fill="#000"/>
<rect x="209" y="351" width="1" height="69" fill="#000"/>
<rect x="207" y="371" width="5" height="12" fill="#000"/>
<rect x="208" y="372" width="3" height="10" fill="#fff"/>
<rect x="217" y="363" width="1" height="68" fill="#000"/>
<rect x="215" y="371" width="5" height="18" fill="#000"/>
<rect x="225" y="318" width="1" height="80" fill="#000"/>
<rect x="223" y="360" width="5" height="28" fill="#000"/>
<rect x="224" y="361" width="3" height="26" fill="#fff"/>
<rect x="233" y="308" width="1" height="53" fill="#000"/>
<rect x="231" y="308" width="5" height="53" fill="#000"/>
<rect x="232" y="309" width="3" height="51" fill="#fff"/>
<rect x="241" y="313" width="1" height="44" fill="#000"/>
<rect x="239" y="327" width="5" height="13" fill="#000"/>
<rect x="249" y="328" width="1" height="23" fill="#000"/>
<rect x="247" y="331" width="5" height="9" fill="#000"/>
<rect x="248" y="332" width="3" height="7" fill="#fff"/>
<rect x="257" y="305" width="1" height="55" fill="#000"/>
<rect x="255" y="331" width="5" height="23" fill="#000"/>
<rect x="265" y="295" width="1" height="103" fill="#000"/>
<rect x="263" y="306" width="5" height="47" fill="#000"/>
<rect x="264" y="307" width="3" height="45" fill="#fff"/>
<rect x="273" y="279" width="1" height="64" fill="#000"/>
<rect x="271" y="304" width="5" height="29" fill="#000"/>
<rect x="281" y="331" width="1" height="18" fill="#000"/>
<rect x="279" y="333" width="5" height="8" fill="#000"/>
<rect x="289" y="320" width="1" height="23" fill="#000"/>
<rect x="287" y="333" width="5" height="8" fill="#000"/>
<rect x="288" y="334" width="3" height="6" fill="#fff"/>
<rect x="297" y="325" width="1" height="19" fill="#000"/>
<rect x="295" y="332" width="5" height="2" fill="#000"/>
<rect x="305" y="314" width="1" height="114" fill="#000"/>
<rect x="303" y="333" width="5" height="66" fill="#000"/>
<rect x="313" y="345" width="1" height="116" fill="#000"/>
<rect x="311" y="398" width="5" height="43" fill="#000"/>
<rect x="321" y="418" width="1" height="93" fill="#000"/>
<rect x="319" y="440" width="5" height="2" fill="#000"/>
<rect x="329" y="420" width="1" height="37" fill="#000"/>
<rect x="327" y="423" width="5" height="18" fill="#000"/>
<rect x="328" y="424" width="3" height="16" fill="#fff"/>
<rect x="337" y="400" width="1" height="26" fill="#000"/>
<rect x="335" y="406" width="5" height="15" fill="#000"/>
<rect x="336" y="407" width="3" height="13" fill="#fff"/>
<rect x="345" y="403" width="1" height="32" fill="#000"/>
<rect x="343" y="406" width="5" height="20" fill="#000"/>
<rect x="353" y="329" width="1" height="100" fill="#000"/>
<rect x="351" y="366" width="5" height="59" fill="#000"/>
<rect x="352" y="367" width="3" height="57" fill="#fff"/>
<rect x="361" y="301" width="1" height="78" fill="#000"/>
<rect x="359" y="365" width="5" height="8" fill="#000"/>
<rect x="369" y="308" width="1" height="83" fill="#000"/>
<rect x="367" y="325" width="5" height="46" fill="#000"/>
<rect x="368" y="326" width="3" height="44" fill="#fff"/>
<rect x="377" y="323" width="1" height="263" fill="#000"/>
<rect x="375" y="324" width="5" height="217" fill="#000"/>
<rect x="385" y="518" width="1" height="24" fill="#000"/>
<rect x="383" y="526" width="5" height="14" fill="#000"/>
<rect x="384" y="527" width="3" height="12" fill="#fff"/>
<rect x="393" y="511" width="1" height="22" fill="#000"/>
<rect x="391" y="521" width="5" height="6" fill="#000"/>
<rect x="392" y="522" width="3" height="4" fill="#fff"/>
<rect x="401" y="468" width="1" height="80" fill="#000"/>
<rect x="399" y="521" width="5" height="7" fill="#000"/>
<rect x="409" y="525" width="1" height="104" fill="#000"/>
<rect x="407" y="527" width="5" height="82" fill="#000"/>
<rect x="417" y="565" width="1" height="76" fill="#000"/>
<rect x="415" y="605" width="5" height="11" fill="#000"/>
<rect x="416" y="606" width="3" height="9" fill="#fff"/>
<rect x="425" y="583" width="1" height="28" fill="#000"/>
<rect x="423" y="588" width="5" height="17" fill="#000"/>
<rect x="424" y="589" width="3" height="15" fill="#fff"/>
<rect x="433" y="566" width="1" height="34" fill="#000"/>
<rect x="431" y="575" width="5" height="13" fill="#000"/>
<rect x="432" y="576" width="3" height="11" fill="#fff"/>
<rect x="441" y="562" width="1" height="32" fill="#000"/>
<rect x="439" y="574" width="5" height="5" fill="#000"/>
<rect x="449" y="568" width="1" height="82" fill="#000"/>
<rect x="447" y="578" width="5" height="9" fill="#000"/>
<rect x="457" y="573" width="1" height="61" fill="#000"/>
<rect x="455" y="586" width="5" height="17" fill="#000"/>
<rect x="465" y="594" width="1" height="42" fill="#000"/>
<rect x="463" y="601" width="5" height="9" fill="#000"/>
<rect x="473" y="597" width="1" height="52" fill="#000"/>
<rect x="471" y="609" width="5" height="24" fill="#000"/>
<rect x="481" y="607" width="1" height="44" fill="#000"/>
<rect x="479" y="638" width="5" height="13" fill="#000"/>
<rect x="480" y="639" width="3" height="11" fill="#fff"/>
<rect x="489" y="620" width="1" height="25" fill="#000"/>
<rect x="487" y="620" width="5" height="18" fill="#000"/>
<rect x="488" y="621" width="3" height="16" fill="#fff"/>
<rect x="497" y="580" width="1" height="88" fill="#000"/>
<rect x="495" y="618" width="5" height="11" fill="#000"/>
<rect x="505" y="594" width="1" height="61" fill="#000"/>
<rect x="503" y="618" width="5" height="11" fill="#000"/>
<rect x="504" y="619" width="3" height="9" fill="#fff"/>
<rect x="513" y="531" width="1" height="124" fill="#000"/>
<rect x="511" y="531" width="5" height="87" fill="#000"/>
<rect x="512" y="532" width="3" height="85" fill="#fff"/>
<rect x="521" y="531" width="1" height="86" fill="#000"/>
<rect x="519" y="531" width="5" height="77" fill="#000"/>
<rect x="529" y="596" width="1" height="28" fill="#000"/>
<rect x="527" y="607" width="5" height="2" fill="#000"/>
<rect x="537" y="597" width="1" height="31" fill="#000"/>
<rect x="535" y="608" width="5" height="16" fill="#000"/>
<rect x="545" y="582" width="1" height="57" fill="#000"/>
<rect x="543" y="610" width="5" height="14" fill="#000"/>
<rect x="544" y="611" width="3" height="12" fill="#fff"/>
<rect x="553" y="555" width="1" height="66" fill="#000"/>
<rect x="551" y="562" width="5" height="48" fill="#000"/>
<rect x="552" y="563" width="3" height="46" fill="#fff"/>
<rect x="561" y="505" width="1" height="111" fill="#000"/>
<rect x="559" y="548" width="5" height="15" fill="#000"/>
<rect x="560" y="549" width="3" height="13" fill="#fff"/>
<rect x="569" y="532" width="1" height="23" fill="#000"/>
<rect x="567" y="544" width="5" height="6" fill="#000"/>
<rect x="568" y="545" width="3" height="4" fill="#fff"/>
<rect x="577" y="522" width="1" height="24" fill="#000"/>
<rect x="575" y="526" width="5" height="15" fill="#000"/>
<rect x="576" y="527" width="3" height="13" fill="#fff"/>
<rect x="585" y="526" width="1" height="45" fill="#000"/>
<rect x="583" y="526" width="5" height="37" fill="#000"/>
<rect x="593" y="490" width="1" height="93" fill="#000"/>
<rect x="591" y="541" width="5" height="22" fill="#000"/>
<rect x="592" y="542" width="3" height="20" fill="#fff"/>
<rect x="601" y="478" width="1" height="76" fill="#000"/>
<rect x="599" y="503" width="5" height="38" fill="#000"/>
<rect x="600" y="504" width="3" height="36" fill="#fff"/>
<rect x="609" y="429" width="1" height="83" fill="#000"/>
<rect x="607" y="470" width="5" height="33" fill="#000"/>
<rect x="608" y="471" width="3" height="31" fill="#fff"/>
<rect x="617" y="413" width="1" height="68" fill="#000"/>
<rect x="615" y="453" width="5" height="19" fill="#000"/>
<rect x="616" y="454" width="3" height="17" fill="#fff"/>
<rect x="625" y="440" width="1" height="28" fill="#000"/>
<rect x="623" y="448" width="5" height="3" fill="#000"/>
<rect x="624" y="449" width="3" height="1" fill="#fff"/>
<rect x="633" y="435" width="1" height="24" fill="#000"/>
<rect x="631" y="449" width="5" height="4" fill="#000"/>
<rect x="641" y="328" width="1" height="167" fill="#000"/>
<rect x="639" y="348" width="5" height="105" fill="#000"/>
<rect x="640" y="349" width="3" height="103" fill="#fff"/>
<rect x="649" y="330" width="1" height="51" fill="#000"/>
<rect x="647" y="348" width="5" height="2" fill="#000"/>
<rect x="657" y="315" width="1" height="89" fill="#000"/>
<rect x="655" y="350" width="5" height="21" fill="#000"/>
<rect x="665" y="363" width="1" height="50" fill="#000"/>
<rect x="663" y="371" width="5" height="29" fill="#000"/>
<rect x="673" y="371" width="1" height="35" fill="#000"/>
<rect x="671" y="373" width="5" height="23" fill="#000"/>
<rect x="672" y="374" width="3" height="21" fill="#fff"/>
<rect x="681" y="363" width="1" height="16" fill="#000"/>
<rect x="679" y="370" width="5" height="3" fill="#000"/>
<rect x="680" y="371" width="3" height="1" fill="#fff"/>
<rect x="689" y="346" width="1" height="63" fill="#000"/>
<rect x="687" y="369" width="5" height="14" fill="#000"/>
<rect x="697" y="323" width="1" height="66" fill="#000"/>
<rect x="695" y="361" width="5" height="22" fill="#000"/>
<rect x="696" y="362" width="3" height="20" fill="#fff"/>
<rect x="705" y="307" width="1" height="60" fill="#000"/>
<rect x="703" y="313" width="5" height="48" fill="#000"/>
<rect x="704" y="314" width="3" height="46" fill="#fff"/>
<rect x="713" y="311" width="1" height="25" fill="#000"/>
<rect x="711" y="312" width="5" height="20" fill="#000"/>
<rect x="721" y="295" width="1" height="34" fill="#000"/>
<rect x="719" y="296" width="5" height="4" fill="#000"/>
<rect x="729" y="298" width="1" height="34" fill="#000"/>
<rect x="727" y="298" width="5" height="30" fill="#000"/>
<rect x="737" y="322" width="1" height="32" fill="#000"/>
<rect x="735" y="327" width="5" height="17" fill="#000"/>
<rect x="745" y="311" width="1" height="47" fill="#000"/>
<rect x="743" y="335" width="5" height="8" fill="#000"/>
<rect x="744" y="336" width="3" height="6" fill="#fff"/>
<rect x="753" y="298" width="1" height="68" fill="#000"/>
<rect x="751" y="321" width="5" height="15" fill="#000"/>
<rect x="752" y="322" width="3" height="13" fill="#fff"/>
<rect x="761" y="247" width="1" height="138" fill="#000"/>
<rect x="759" y="250" width="5" height="71" fill="#000"/>
<rect x="760" y="251" width="3" height="69" fill="#fff"/>
<rect x="769" y="243" width="1" height="47" fill="#000"/>
<rect x="767" y="250" width="5" height="40" fill="#000"/>
<rect x="777" y="269" width="1" height="24" fill="#000"/>
<rect x="775" y="288" width="5" height="2" fill="#000"/>
<rect x="785" y="276" width="1" height="21" fill="#000"/>
<rect x="783" y="286" width="5" height="3" fill="#000"/>
<rect x="784" y="287" width="3" height="1" fill="#fff"/>
<rect x="793" y="261" width="1" height="65" fill="#000"/>
<rect x="791" y="286" width="5" height="39" fill="#000"/>
<rect x="801" y="298" width="1" height="73" fill="#000"/>
<rect x="799" y="324" width="5" height="11" fill="#000"/>
<rect x="809" y="305" width="1" height="53" fill="#000"/>
<rect x="807" y="323" width="5" height="12" fill="#000"/>
<rect x="808" y="324" width="3" height="10" fill="#fff"/>
<rect x="817" y="316" width="1" height="39" fill="#000"/>
<rect x="815" y="323" width="5" height="28" fill="#000"/>
<rect x="825" y="343" width="1" height="21" fill="#000"/>
<rect x="823" y="354" width="5" height="3" fill="#000"/>
<rect x="824" y="355" width="3" height="1" fill="#fff"/>
<rect x="833" y="338" width="1" height="25" fill="#000"/>
<rect x="831" y="350" width="5" height="5" fill="#000"/>
<rect x="832" y="351" width="3" height="3" fill="#fff"/>
<rect x="841" y="283" width="1" height="73" fill="#000"/>
<rect x="839" y="303" width="5" height="47" fill="#000"/>
<rect x="840" y="304" width="3" height="45" fill="#fff"/>
<rect x="849" y="291" width="1" height="48" fill="#000"/>
<rect x="847" y="303" width="5" height="21" fill="#000"/>
<rect x="857" y="304" width="1" height="57" fill="#000"/>
<rect x="855" y="322" width="5" height="17" fill="#000"/>
<rect x="865" y="333" width="1" height="35" fill="#000"/>
<rect x="863" y="338" width="5" height="20" fill="#000"/>
<rect x="873" y="307" width="1" height="59" fill="#000"/>
<rect x="871" y="323" width="5" height="33" fill="#000"/>
<rect x="872" y="324" width="3" height="31" fill="#fff"/>
<rect x="881" y="287" width="1" height="73" fill="#000"/>
<rect x="879" y="323" width="5" height="16" fill="#000"/>
<rect x="889" y="289" width="1" height="114" fill="#000"/>
<rect x="887" y="338" width="5" height="58" fill="#000"/>
<rect x="897" y="386" width="1" height="59" fill="#000"/>
<rect x="895" y="396" width="5" height="25" fill="#000"/>
<rect x="905" y="415" width="1" height="51" fill="#000"/>
<rect x="903" y="421" width="5" height="5" fill="#000"/>
<rect x="913" y="409" width="1" height="28" fill="#000"/>
<rect x="911" y="413" width="5" height="13" fill="#000"/>
<rect x="912" y="414" width="3" height="11" fill="#fff"/>
<rect x="921" y="409" width="1" height="19" fill="#000"/>
<rect x="919" y="415" width="5" height="8" fill="#000"/>
<rect x="929" y="422" width="1" height="19" fill="#000"/>
<rect x="927" y="423" width="5" height="10" fill="#000"/>
<rect x="937" y="414" width="1" height="36" fill="#000"/>
<rect x="935" y="421" width="5" height="10" fill="#000"/>
<rect x="936" y="422" width="3" height="8" fill="#fff"/>
<rect x="945" y="401" width="1" height="105" fill="#000"/>
<rect x="943" y="421" width="5" height="5" fill="#000"/>
<rect x="953" y="396" width="1" height="75" fill="#000"/>
<rect x="951" y="423" width="5" height="28" fill="#000"/>
<rect x="961" y="442" width="1" height="13" fill="#000"/>
<rect x="959" y="448" width="5" height="3" fill="#000"/>
<rect x="960" y="449" width="3" height="1" fill="#fff"/>
<rect x="969" y="439" width="1" height="39" fill="#000"/>
<rect x="967" y="459" width="5" height="16" fill="#000"/>
<rect x="968" y="460" width="3" height="14" fill="#fff"/>
<rect x="977" y="456" width="1" height="8" fill="#000"/>
<rect x="975" y="459" width="5" height="3" fill="#000"/>
</g>
</g>
<path d="M989.5 362.5h7v11h4.500l-8 8l-8 -8h4.500z" fill="none" stroke="#ff0000" stroke-width="1.150"/>
<path d="M1000.5 511.5l8 8h-4.500v11h-7v-11h-4.500z" fill="none" stroke="#ff0000" stroke-width="1.150"/>
<path d="M1024.5 562.5l8 8h-4.500v11h-7v-11h-4.500z" fill="none" stroke="#ff0000" stroke-width="1.150"/>
<path d="M986.5 110h10l-5 5z" fill="#708090"/>
<g shape-rendering="crispEdges">
<rect x="8" y="109" width="1232" height="1" fill="#000"/>
<rect x="8" y="109" width="1" height="575" fill="#000"/>
<rect x="8" y="683" width="1232" height="1" fill="#000"/>
<rect x="1239" y="109" width="1" height="575" fill="#000"/>
<rect x="1240" y="119" width="2" height="1" fill="#000"/>
<rect x="1240" y="152" width="2" height="1" fill="#000"/>
<rect x="1240" y="185" width="2" height="1" fill="#000"/>
<rect x="1240" y="218" width="2" height="1" fill="#000"/>
<rect x="1240" y="251" width="2" height="1" fill="#000"/>
<rect x="1240" y="284" width="2" height="1" fill="#000"/>
<rect x="1240" y="317" width="2" height="1" fill="#000"/>
<rect x="1240" y="350" width="2" height="1" fill="#000"/>
<rect x="1240" y="383" width="2" height="1" fill="#000"/>
<rect x="1240" y="416" width="2" height="1" fill="#000"/>
<rect x="1240" y="449" width="2" height="1" fill="#000"/>
<rect x="1240" y="482" width="2" height="1" fill="#000"/>
<rect x="1240" y="515" width="2" height="1" fill="#000"/>
<rect x="1240" y="548" width="2" height="1" fill="#000"/>
<rect x="1240" y="581" width="2" height="1" fill="#000"/>
<rect x="1240" y="614" width="2" height="1" fill="#000"/>
<rect x="1240" y="647" width="2" height="1" fill="#000"/>
<rect x="1240" y="680" width="2" height="1" fill="#000"/>
<rect x="9" y="684" width="1" height="3" fill="#000"/>
<rect x="73" y="684" width="1" height="3" fill="#000"/>
<rect x="137" y="684" width="1" height="3" fill="#000"/>
<rect x="201" y="684" width="1" height="3" fill="#000"/>
<rect x="265" y="684" width="1" height="3" fill="#000"/>
<rect x="329" y="684" width="1" height="3" fill="#000"/>
<rect x="393" y="684" width="1" height="3" fill="#000"/>
<rect x="457" y="684" width="1" height="3" fill="#000"/>
<rect x="521" y="684" width="1" height="3" fill="#000"/>
<rect x="585" y="684" width="1" height="3" fill="#000"/>
<rect x="649" y="684" width="1" height="3" fill="#000"/>
<rect x="713" y="684" width="1" height="3" fill="#000"/>
<rect x="777" y="684" width="1" height="3" fill="#000"/>
<rect x="841" y="684" width="1" height="3" fill="#000"/>
<rect x="905" y="684" width="1" height="3" fill="#000"/>
<rect x="969" y="684" width="1" height="3" fill="#000"/>
</g>
<text transform="translate(1245.5 122) scale(0.89 1)" font-size="9.8" fill="#000" xml:space="preserve">1.67475</text>
<text transform="translate(1245.5 155) scale(0.89 1)" font-size="9.8" fill="#000" xml:space="preserve">1.67305</text>
<text transform="translate(1245.5 188) scale(0.89 1)" font-size="9.8" fill="#000" xml:space="preserve">1.67135</text>
<text transform="translate(1245.5 221) scale(0.89 1)" font-size="9.8" fill="#000" xml:space="preserve">1.66965</text>
<text transform="translate(1245.5 254) scale(0.89 1)" font-size="9.8" fill="#000" xml:space="preserve">1.66800</text>
<text transform="translate(1245.5 287) scale(0.89 1)" font-size="9.8" fill="#000" xml:space="preserve">1.66630</text>
<text transform="translate(1245.5 320) scale(0.89 1)" font-size="9.8" fill="#000" xml:space="preserve">1.66460</text>
<text transform="translate(1245.5 353) scale(0.89 1)" font-size="9.8" fill="#000" xml:space="preserve">1.66290</text>
<text transform="translate(1245.5 386) scale(0.89 1)" font-size="9.8" fill="#000" xml:space="preserve">1.66120</text>
<text transform="translate(1245.5 419) scale(0.89 1)" font-size="9.8" fill="#000" xml:space="preserve">1.65950</text>
<text transform="translate(1245.5 452) scale(0.89 1)" font-size="9.8" fill="#000" xml:space="preserve">1.65780</text>
<text transform="translate(1245.5 485) scale(0.89 1)" font-size="9.8" fill="#000" xml:space="preserve">1.65610</text>
<text transform="translate(1245.5 518) scale(0.89 1)" font-size="9.8" fill="#000" xml:space="preserve">1.65440</text>
<text transform="translate(1245.5 551) scale(0.89 1)" font-size="9.8" fill="#000" xml:space="preserve">1.65270</text>
<text transform="translate(1245.5 584) scale(0.89 1)" font-size="9.8" fill="#000" xml:space="preserve">1.65100</text>
<text transform="translate(1245.5 617) scale(0.89 1)" font-size="9.8" fill="#000" xml:space="preserve">1.64930</text>
<text transform="translate(1245.5 650) scale(0.89 1)" font-size="9.8" fill="#000" xml:space="preserve">1.64760</text>
<text transform="translate(1245.5 683) scale(0.89 1)" font-size="9.8" fill="#000" xml:space="preserve">1.64595</text>
<text transform="translate(8 695.5) scale(0.95 1)" font-size="9.8" fill="#000" xml:space="preserve">10 Mar 2014</text>
<text transform="translate(72 695.5) scale(0.95 1)" font-size="9.8" fill="#000" xml:space="preserve">11 Mar 12:00</text>
<text transform="translate(136 695.5) scale(0.95 1)" font-size="9.8" fill="#000" xml:space="preserve">12 Mar 20:00</text>
<text transform="translate(200 695.5) scale(0.95 1)" font-size="9.8" fill="#000" xml:space="preserve">14 Mar 04:00</text>
<text transform="translate(264 695.5) scale(0.95 1)" font-size="9.8" fill="#000" xml:space="preserve">17 Mar 12:00</text>
<text transform="translate(328 695.5) scale(0.95 1)" font-size="9.8" fill="#000" xml:space="preserve">18 Mar 20:00</text>
<text transform="translate(392 695.5) scale(0.95 1)" font-size="9.8" fill="#000" xml:space="preserve">20 Mar 04:00</text>
<text transform="translate(456 695.5) scale(0.95 1)" font-size="9.8" fill="#000" xml:space="preserve">21 Mar 12:00</text>
<text transform="translate(520 695.5) scale(0.95 1)" font-size="9.8" fill="#000" xml:space="preserve">24 Mar 20:00</text>
<text transform="translate(584 695.5) scale(0.95 1)" font-size="9.8" fill="#000" xml:space="preserve">26 Mar 04:00</text>
<text transform="translate(648 695.5) scale(0.95 1)" font-size="9.8" fill="#000" xml:space="preserve">27 Mar 12:00</text>
<text transform="translate(712 695.5) scale(0.95 1)" font-size="9.8" fill="#000" xml:space="preserve">28 Mar 20:00</text>
<text transform="translate(776 695.5) scale(0.95 1)" font-size="9.8" fill="#000" xml:space="preserve">1 Apr 00:00</text>
<text transform="translate(840 695.5) scale(0.95 1)" font-size="9.8" fill="#000" xml:space="preserve">2 Apr 08:00</text>
<text transform="translate(904 695.5) scale(0.95 1)" font-size="9.8" fill="#000" xml:space="preserve">3 Apr 16:00</text>
<text transform="translate(968 695.5) scale(0.95 1)" font-size="9.8" fill="#000" xml:space="preserve">7 Apr 00:00</text>
<rect x="1242" y="387" width="39" height="11" fill="#0000cd" shape-rendering="crispEdges"/>
<text transform="translate(1245.5 396) scale(0.89 1)" font-size="9.8" fill="#fff" xml:space="preserve">1.66068</text>
<rect x="1242" y="444" width="39" height="11" fill="#ff0000" shape-rendering="crispEdges"/>
<text transform="translate(1245.5 453) scale(0.89 1)" font-size="9.8" fill="#fff" xml:space="preserve">1.65775</text>
<rect x="1242" y="455" width="39" height="11" fill="#000" shape-rendering="crispEdges"/>
<text transform="translate(1245.5 464) scale(0.89 1)" font-size="9.8" fill="#fff" xml:space="preserve">1.65717</text>
<rect x="1242" y="496" width="39" height="11" fill="#0000cd" shape-rendering="crispEdges"/>
<text transform="translate(1245.5 505) scale(0.89 1)" font-size="9.8" fill="#fff" xml:space="preserve">1.65509</text>
<rect x="1242" y="553" width="39" height="11" fill="#0000ff" shape-rendering="crispEdges"/>
<text transform="translate(1245.5 562) scale(0.89 1)" font-size="9.8" fill="#fff" xml:space="preserve">1.65216</text>
</svg>
<div class="abs" style="left:4px;top:703px;width:1280px;height:21px;background:#e1e1e1"></div>
<div class="hl" style="left:4px;top:703px;width:1280px;background:#000"></div>
<div class="vl" style="left:4px;top:105px;height:618px;background:#a8a8a8"></div>
<div class="vl" style="left:5px;top:106px;height:617px;background:#6e6e62"></div>
<div class="abs" style="left:4px;top:702px;width:1280px;height:1px;background:#fff"></div>
<div class="hl" style="left:4px;top:703px;width:1280px;background:#000"></div>
<div class="abs" style="left:88px;top:703px;width:80px;height:19px;background:#fff;border:1px solid #000;border-top:none;box-sizing:border-box"></div>
<div class="tab" style="left:19px">EURUSD,H1</div>
<div class="tab" style="left:179px">EURJPY,H4</div>
<div class="tab" style="left:256px">GBPCHF,H4</div>
<div class="tab" style="left:336px">AUDUSD,Daily</div>
<div class="tab" style="left:426px">NZDUSD,Daily</div>
<div class="tab" style="left:515px">XAUUSD,H4</div>
<div class="tab" style="left:594px">EURCHF,Daily</div>
<div class="tab" style="left:683px">EURGBP,Daily</div>
<div class="tab" style="left:771.5px">AUDNZD,H4</div>
<div class="tab" style="left:851.5px">USDCHF,H4</div>
<div class="tab" style="left:930px">USDJPY,H4</div>
<div class="tab" style="left:1006.5px">USDCAD,H4</div>
<div class="tab" style="left:1085px">GBPJPY,Daily</div>
<div class="tab" style="left:100px;color:#000;transform:scaleX(.875)">GBPUSD,H4</div>
<div class="tsep" style="left:244px"></div>
<div class="tsep" style="left:324px"></div>
<div class="tsep" style="left:416px"></div>
<div class="tsep" style="left:504px"></div>
<div class="tsep" style="left:582px"></div>
<div class="tsep" style="left:671px"></div>
<div class="tsep" style="left:760px"></div>
<div class="tsep" style="left:840px"></div>
<div class="tsep" style="left:919px"></div>
<div class="tsep" style="left:996px"></div>
<div class="tsep" style="left:1075px"></div>
<div class="tsep" style="left:1160px"></div>
<div class="abs" style="left:1256px;top:709px;width:0;height:0;border-top:4px solid transparent;border-bottom:4px solid transparent;border-right:4px solid #a0a0a0"></div>
<div class="abs" style="left:1272px;top:709px;width:0;height:0;border-top:4px solid transparent;border-bottom:4px solid transparent;border-left:4px solid #a0a0a0"></div>
<div class="abs" style="left:4px;top:724px;width:1280px;height:20px;background:#e1e1e1"></div>
<div class="hl" style="left:4px;top:723px;width:1280px;background:#f6f6f6"></div>
<div class="t" style="left:5.5px;top:730px;font-size:11px">Для справки, нажмите F1</div>
<div class="t" style="left:569px;top:730px;font-size:11px">Default</div>
<div class="t" style="left:1178.5px;top:730px;font-size:11px">442/0 kb</div>
<div class="vl" style="left:565px;top:726px;height:16px;background:#a6a6a6"></div><div class="vl" style="left:566px;top:726px;height:16px;background:#fbfbfb"></div>
<div class="vl" style="left:672px;top:726px;height:16px;background:#a6a6a6"></div><div class="vl" style="left:673px;top:726px;height:16px;background:#fbfbfb"></div>
<div class="vl" style="left:773px;top:726px;height:16px;background:#a6a6a6"></div><div class="vl" style="left:774px;top:726px;height:16px;background:#fbfbfb"></div>
<div class="vl" style="left:845px;top:726px;height:16px;background:#a6a6a6"></div><div class="vl" style="left:846px;top:726px;height:16px;background:#fbfbfb"></div>
<div class="vl" style="left:916px;top:726px;height:16px;background:#a6a6a6"></div><div class="vl" style="left:917px;top:726px;height:16px;background:#fbfbfb"></div>
<div class="vl" style="left:985px;top:726px;height:16px;background:#a6a6a6"></div><div class="vl" style="left:986px;top:726px;height:16px;background:#fbfbfb"></div>
<div class="vl" style="left:1056px;top:726px;height:16px;background:#a6a6a6"></div><div class="vl" style="left:1057px;top:726px;height:16px;background:#fbfbfb"></div>
<div class="vl" style="left:1122px;top:726px;height:16px;background:#a6a6a6"></div><div class="vl" style="left:1123px;top:726px;height:16px;background:#fbfbfb"></div>
<svg class="abs" style="left:1120px;top:724px" width="168" height="24" viewBox="1120 724 168 24"><rect x="1128" y="729" width="2" height="9" fill="#5c8a00"/><rect x="1128" y="739" width="2" height="2" fill="#b00000"/><rect x="1131" y="729" width="2" height="8" fill="#5c8a00"/><rect x="1131" y="738" width="2" height="3" fill="#b00000"/><rect x="1134" y="729" width="2" height="6" fill="#5c8a00"/><rect x="1134" y="736" width="2" height="5" fill="#b00000"/><rect x="1137" y="729" width="2" height="5" fill="#5c8a00"/><rect x="1137" y="735" width="2" height="6" fill="#b00000"/><rect x="1140" y="729" width="2" height="4" fill="#5c8a00"/><rect x="1140" y="734" width="2" height="7" fill="#b00000"/><rect x="1143" y="729" width="2" height="3" fill="#5c8a00"/><rect x="1143" y="733" width="2" height="8" fill="#b00000"/><rect x="1146" y="729" width="2" height="1" fill="#5c8a00"/><rect x="1146" y="731" width="2" height="10" fill="#b00000"/><rect x="1149" y="730" width="2" height="11" fill="#b00000"/><path d="M1271.0 744L1284 731.0" stroke="#a8a8a8"/><path d="M1272.0 744L1284 732.0" stroke="#fff"/><path d="M1274.5 744L1284 734.5" stroke="#a8a8a8"/><path d="M1275.5 744L1284 735.5" stroke="#fff"/><path d="M1278.0 744L1284 738.0" stroke="#a8a8a8"/><path d="M1279.0 744L1284 739.0" stroke="#fff"/><path d="M1281.5 744L1284 741.5" stroke="#a8a8a8"/><path d="M1282.5 744L1284 742.5" stroke="#fff"/></svg>
<div class="abs" style="left:4px;top:744px;width:1280px;height:4px;background:linear-gradient(#4e4e50,#6c6c6e 1px,#8e8e90)"></div>
<div class="abs" style="left:4px;top:744px;width:41px;height:4px;background:linear-gradient(#c45e10,#f58a20 1.2px,#ffa940);border-radius:0 4px 0 0"></div>
</div></body></html>
